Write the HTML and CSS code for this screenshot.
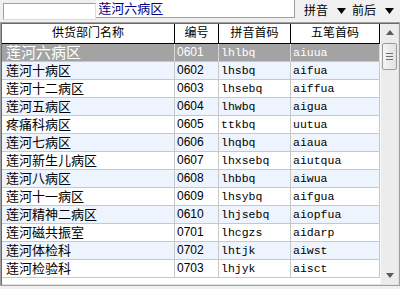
FILE: index.html
```html
<!DOCTYPE html>
<html lang="zh">
<head>
    <meta charset="UTF-8">
    <title>供货部门</title>
    <link rel="stylesheet" href="styles.css">
</head>
<body>
    <div class="topbar">
        <div class="search-box"></div>
        <div class="current">莲河六病区</div>
        <div class="options">
            <span class="opt">拼音</span>
            <svg class="tri" width="9" height="6" viewBox="0 0 9 6"><path d="M0 0h9L4.5 6z" fill="#000"/></svg>
            <span class="opt">前后</span>
            <svg class="tri" width="9" height="6" viewBox="0 0 9 6"><path d="M0 0h9L4.5 6z" fill="#000"/></svg>
        </div>
    </div>
    <div class="grid">
        <div class="table">
            <div class="row head">
                <div class="cell">供货部门名称</div>
                <div class="cell">编号</div>
                <div class="cell">拼音首码</div>
                <div class="cell">五笔首码</div>
            </div>
            <div id="rows"></div>
        </div>
        <div class="scrollbar">
            <svg class="arrow" width="8" height="5" viewBox="0 0 8 5"><path d="M4 0L8 5H0z" fill="#5a5a5a"/></svg>
            <div class="thumb"><i></i><i></i><i></i></div>
            <div class="track"></div>
            <svg class="arrow" width="8" height="5" viewBox="0 0 8 5"><path d="M0 0h8L4 5z" fill="#5a5a5a"/></svg>
        </div>
    </div>
    <script>
        const depts = [
            ['莲河六病区', '0601', 'lhlbq', 'aiuua'],
            ['莲河十病区', '0602', 'lhsbq', 'aifua'],
            ['莲河十二病区', '0603', 'lhsebq', 'aiffua'],
            ['莲河五病区', '0604', 'lhwbq', 'aigua'],
            ['疼痛科病区', '0605', 'ttkbq', 'uutua'],
            ['莲河七病区', '0606', 'lhqbq', 'aiaua'],
            ['莲河新生儿病区', '0607', 'lhxsebq', 'aiutqua'],
            ['莲河八病区', '0608', 'lhbbq', 'aiwua'],
            ['莲河十一病区', '0609', 'lhsybq', 'aifgua'],
            ['莲河精神二病区', '0610', 'lhjsebq', 'aiopfua'],
            ['莲河磁共振室', '0701', 'lhcgzs', 'aidarp'],
            ['莲河体检科', '0702', 'lhtjk', 'aiwst'],
            ['莲河检验科', '0703', 'lhjyk', 'aisct']
        ];
        const rows = document.getElementById('rows');
        depts.forEach((d, i) => {
            const row = document.createElement('div');
            row.classList.add('row');
            if (i === 0) row.classList.add('selected');
            else if (i % 2 === 1) row.classList.add('alt');
            row.innerHTML =
                `<div class="cell name">${d[0]}</div>` +
                `<div class="cell num">${d[1]}</div>` +
                `<div class="cell code">${d[2]}</div>` +
                `<div class="cell code">${d[3]}</div>`;
            rows.appendChild(row);
        });
    </script>
</body>
</html>
```

FILE: styles.css
```css
html, body {
    margin: 0;
    padding: 0;
    height: 100%;
    overflow: hidden;
}
body {
    background-color: #f0f0f0;
    font-family: "Liberation Sans", "Noto Sans CJK SC", sans-serif;
    font-size: 13px;
    color: #000;
}
.topbar {
    display: flex;
    height: 22px;
}
.search-box {
    width: 94px;
    height: 17px;
    margin: 3px 0 0 3px;
    box-sizing: border-box;
    background-color: #fff;
    border: 1px solid #a0a0a0;
    border-right-color: #dcdcdc;
    border-bottom-color: #dcdcdc;
}
.current {
    width: 200px;
    height: 18px;
    box-sizing: border-box;
    padding-left: 2px;
    background-color: #fff;
    border-right: 1px solid #a0a0a0;
    border-bottom: 1px solid #a0a0a0;
    color: #000080;
    font-size: 13px;
    line-height: 17px;
}
.options {
    display: flex;
    align-items: center;
    height: 22px;
    padding-left: 9px;
    font-size: 12px;
    white-space: nowrap;
}
.opt {
    line-height: 22px;
}
.tri {
    margin: 0 6px 0 9px;
}
.grid {
    display: flex;
    height: 264px;
    box-sizing: border-box;
    border: 1px solid #a0a0a0;
    box-shadow: inset 1px 1px 0 #696969, inset -1px -1px 0 #e3e3e3;
    padding: 1px;
    background-color: #fff;
}
.table {
    width: 378px;
}
.row {
    display: grid;
    grid-template-columns: 173px 44px 72px 89px;
    height: 18px;
}
.cell {
    box-sizing: border-box;
    border-right: 1px solid #c8c8c8;
    border-bottom: 1px solid #c8c8c8;
    padding-left: 2px;
    line-height: 17px;
    white-space: nowrap;
    overflow: hidden;
}
.head {
    height: 20px;
}
.head .cell {
    border-right-color: #000;
    border-bottom-color: #000;
    padding-left: 0;
    text-align: center;
    font-size: 12px;
    line-height: 19px;
}
.name {
    padding-left: 4px;
}
.num {
    font-size: 12px;
}
.code {
    font-family: "Liberation Mono", monospace;
    font-size: 11.5px;
}
.alt {
    background-color: #edf4fd;
}
.selected {
    background-color: #a3a3a3;
    color: #fff;
}
.selected .cell {
    border-right-color: #d8d8d8;
}
.selected .name {
    font-size: 15px;
}
.scrollbar {
    display: flex;
    flex-direction: column;
    align-items: center;
    width: 18px;
    background-color: #ececec;
    border-left: 1px solid #f8f8f8;
    box-sizing: border-box;
}
.arrow {
    margin: 6px 0;
}
.thumb {
    display: flex;
    flex-direction: column;
    justify-content: center;
    align-items: center;
    gap: 2px;
    width: 15px;
    height: 27px;
    margin-top: 2px;
    box-sizing: border-box;
    border: 1px solid #9a9a9a;
    border-radius: 2px;
    background: linear-gradient(to right, #f4f4f4, #e2e2e2);
}
.thumb i {
    display: block;
    width: 7px;
    height: 1px;
    background-color: #6e6e6e;
}
.track {
    flex: 1;
}
```
